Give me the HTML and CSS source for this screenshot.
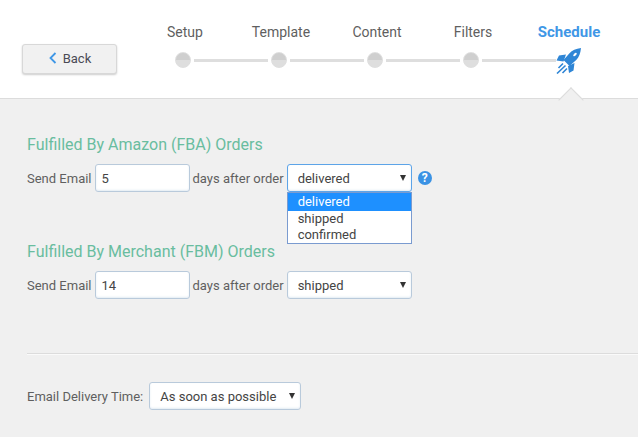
FILE: index.html
```html
<!DOCTYPE html>
<html lang="en">
<head>
  <meta charset="UTF-8" />
  <title>Schedule</title>
  <link rel="stylesheet" href="styles.css">
</head>
<body>
  <header class="top-bar">
    <button class="back-btn" type="button">
      <svg width="8" height="12" viewBox="0 0 8 12" fill="none">
        <path d="M6.500 1L1.500 6L6.500 11" stroke="#3f97e6" stroke-width="1.800"/>
      </svg>
      Back
    </button>
    <div class="steps">
      <div class="step-labels">
        <span>Setup</span>
        <span>Template</span>
        <span>Content</span>
        <span>Filters</span>
        <span class="active">Schedule</span>
      </div>
      <div class="step-track">
        <span class="dot"></span><span class="line"></span>
        <span class="dot"></span><span class="line"></span>
        <span class="dot"></span><span class="line"></span>
        <span class="dot"></span><span class="line"></span>
        <svg class="rocket" width="26" height="26" viewBox="0 0 26 26">
          <path d="M25 0C20 .5 16 2.500 13.500 5.300L7.500 12L13.500 18L20.200 12C23 9.500 24.500 5 25 0Z" fill="#2f86d6"/>
          <path d="M10 6.500L3 7.500L.5 12.500L7.500 13.500ZM18.500 15L17.500 22.500L13 25L12 18Z" fill="#2f86d6"/>
          <ellipse cx="19" cy="6.500" rx="1.200" ry="2.200" transform="rotate(45 19 6.500)" fill="#fff"/>
          <path d="M7 15.500L2.500 20M9.500 17.500L1 25.500M11 20.500L6.500 25" stroke="#2f86d6" stroke-width="1.600"/>
        </svg>
      </div>
    </div>
  </header>

  <main class="content">
    <section class="order-group fba">
      <h2>Fulfilled By Amazon (FBA) Orders</h2>
      <div class="form-row">
        <label>Send Email</label>
        <input class="field days" type="text" value="5">
        <span>days after order</span>
        <div class="select-wrap status open">
          <select class="field"><option>delivered</option></select>
          <ul class="dropdown">
            <li class="selected">delivered</li>
            <li>shipped</li>
            <li>confirmed</li>
          </ul>
        </div>
        <span class="help">?</span>
      </div>
    </section>

    <section class="order-group fbm">
      <h2>Fulfilled By Merchant (FBM) Orders</h2>
      <div class="form-row">
        <label>Send Email</label>
        <input class="field days" type="text" value="14">
        <span>days after order</span>
        <div class="select-wrap status">
          <select class="field"><option>shipped</option></select>
        </div>
      </div>
    </section>

    <hr class="divider">

    <div class="form-row delivery">
      <label>Email Delivery Time:</label>
      <div class="select-wrap time">
        <select class="field"><option>As soon as possible</option></select>
      </div>
    </div>
  </main>
</body>
</html>
```

FILE: styles.css
```css
* {
  box-sizing: border-box;
  margin: 0;
  padding: 0;
}

html, body {
  height: 100%;
}

body {
  font-family: Roboto, sans-serif;
  font-size: 13px;
  color: #5f5f5f;
  background: #f0f0f0;
  overflow: hidden;
}

.top-bar {
  position: relative;
  display: flex;
  height: 99px;
  background: #fff;
  border-bottom: 1px solid #dcdcdc;
}

/* notch pointing at the active step */
.top-bar::after {
  content: "";
  position: absolute;
  left: 561.500px;
  top: 90.500px;
  width: 17px;
  height: 17px;
  background: #f0f0f0;
  border-left: 1px solid #dcdcdc;
  border-top: 1px solid #dcdcdc;
  transform: rotate(45deg);
}

.back-btn {
  display: flex;
  align-items: center;
  justify-content: center;
  gap: 6px;
  width: 95px;
  height: 30px;
  margin: 44px 0 0 22px;
  padding: 0 0 2px 1px;
  font-family: inherit;
  font-size: 13px;
  color: #4a4a55;
  background: #f1f1f1;
  border: 1px solid #d8d8d8;
  border-radius: 3px;
  box-shadow: 0 1px 2px rgba(0,0,0,0.2);
}

.steps {
  margin-left: 18px;
  padding-top: 24px;
}

.step-labels {
  display: grid;
  grid-template-columns: repeat(5, 96px);
  margin-left: 2px;
  font-size: 14px;
  line-height: 16px;
  text-align: center;
}

.step-labels .active {
  font-size: 15px;
  font-weight: 700;
  color: #3f97e6;
}

.step-track {
  display: flex;
  align-items: center;
  gap: 3px;
  height: 26px;
  margin: 7px 0 0 40px;
}

.dot {
  width: 16px;
  height: 16px;
  border: 1px solid #dedede;
  border-radius: 50%;
  background: linear-gradient(#cfcfcf 50%, #dedede 50%);
  flex-shrink: 0;
}

.line {
  width: 74px;
  height: 3px;
  background: #dedede;
}

.rocket {
  flex-shrink: 0;
  margin: 2px 0 0 -3px;
}

.content {
  padding-left: 27px;
}

.order-group h2 {
  font-size: 16px;
  font-weight: 400;
  line-height: 20px;
  color: #69bd9f;
}

.fba {
  padding-top: 36px;
}

.fbm {
  padding-top: 50px;
}

.form-row {
  display: flex;
  align-items: center;
  height: 28px;
  margin-top: 9px;
}

.field {
  height: 28px;
  font-family: inherit;
  font-size: 13px;
  color: #444;
  background: #fff;
  border: 1px solid #b9cadb;
  border-radius: 3px;
  box-shadow: inset 0 -1px 2px rgba(70,130,180,0.15);
  outline: none;
}

.days {
  width: 95px;
  margin: 0 3px;
  padding-left: 6px;
}

.select-wrap {
  position: relative;
}

.select-wrap select {
  width: 100%;
  padding-left: 10px;
  appearance: none;
}

.select-wrap::after {
  content: "";
  position: absolute;
  right: 6px;
  top: 11px;
  border-left: 3.500px solid transparent;
  border-right: 3.500px solid transparent;
  border-top: 6px solid #333;
}

.status {
  width: 125px;
  margin-left: 3px;
}

.open select {
  border-color: #5da4e8;
}

.dropdown {
  position: absolute;
  left: 0;
  top: 28px;
  width: 100%;
  list-style: none;
  line-height: 16px;
  color: #444;
  background: #fff;
  border: 1px solid #7a9bd0;
  z-index: 5;
}

.dropdown li {
  padding-left: 10px;
}

.dropdown .selected {
  padding-top: 1px;
  padding-bottom: 1px;
  color: #fff;
  background: #1e90ff;
}

.help {
  width: 14px;
  height: 14px;
  margin-left: 6px;
  font-size: 12px;
  font-weight: 700;
  line-height: 14px;
  text-align: center;
  color: #fff;
  background: #3a92e4;
  border-radius: 50%;
}

.divider {
  margin-top: 54px;
  height: 2px;
  border: 0;
  border-top: 1px solid #dcdcdc;
  border-bottom: 1px solid #fafafa;
}

.delivery {
  margin-top: 27px;
}

.time {
  width: 152px;
  margin-left: 6px;
}
```
